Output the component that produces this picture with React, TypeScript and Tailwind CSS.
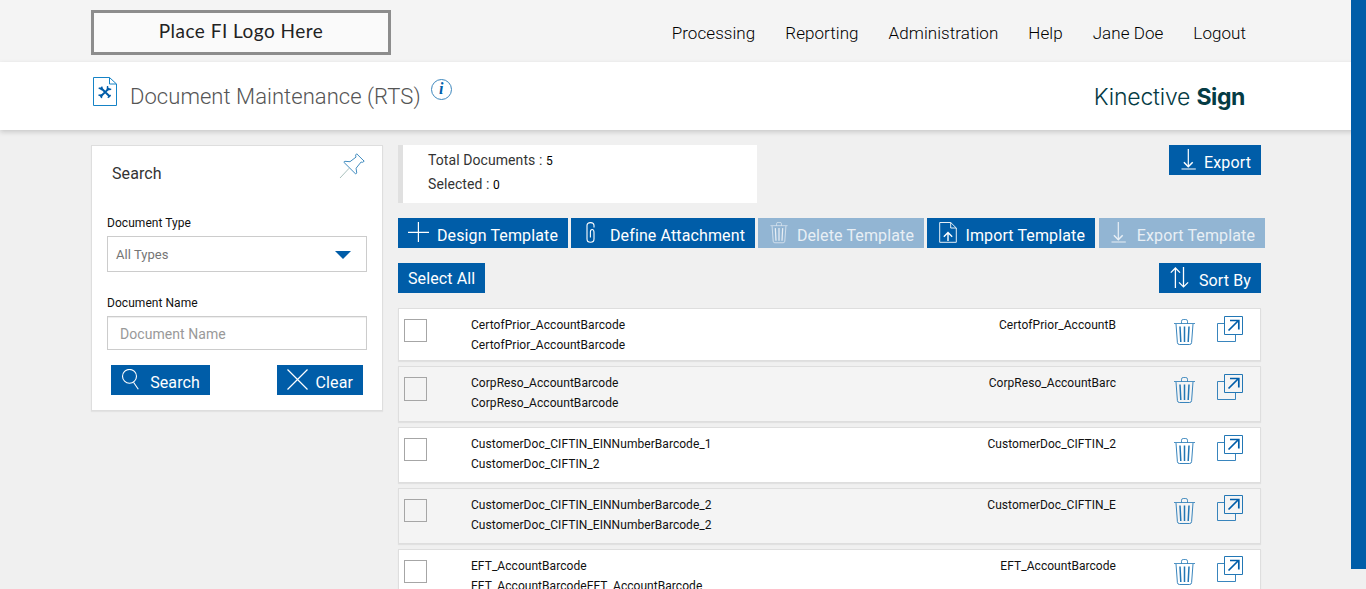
import type { ReactNode } from "react";

const navItems = ["Processing", "Reporting", "Administration", "Help", "Jane Doe", "Logout"];

const documents = [
    { name: "CertofPrior_AccountBarcode", description: "CertofPrior_AccountBarcode", code: "CertofPrior_AccountB", height: "h-[53px]", box: "h-[23px]", icons: "pt-[7px]" },
    { name: "CorpReso_AccountBarcode", description: "CorpReso_AccountBarcode", code: "CorpReso_AccountBarc", height: "h-14", box: "h-6", icons: "pt-[7px]" },
    { name: "CustomerDoc_CIFTIN_EINNumberBarcode_1", description: "CustomerDoc_CIFTIN_2", code: "CustomerDoc_CIFTIN_2", height: "h-14", box: "h-[23px]", icons: "pt-[7px]" },
    { name: "CustomerDoc_CIFTIN_EINNumberBarcode_2", description: "CustomerDoc_CIFTIN_EINNumberBarcode_2", code: "CustomerDoc_CIFTIN_E", height: "h-14", box: "h-[23px]", icons: "pt-1.5" },
    { name: "EFT_AccountBarcode", description: "EFT_AccountBarcodeEFT_AccountBarcode", code: "EFT_AccountBarcode", height: "h-14", box: "h-[23px]", icons: "pt-1.5" },
];

function TrashIcon({ className }: { className?: string }) {
    return (
        <svg width="21" height="27" viewBox="0 0 21 27" fill="none" stroke="currentColor" className={className}>
            <path d="M0 4.5h21M7.5 4.5V2.2q0-1.7 1.7-1.7h2.6q1.7 0 1.7 1.7v2.3" strokeWidth="0.8" />
            <path d="M2 5l1.4 18.6q.2 1.9 2 1.9h10.2q1.8 0 2-1.9L19 5" strokeWidth="0.9" />
            <path d="M6 7.5l.8 15.5M10.5 7.5V23M15 7.5L14.2 23" strokeWidth="1.5" />
        </svg>
    );
}

function OpenIcon() {
    return (
        <svg width="26" height="26" viewBox="0 0 26 26" fill="none" stroke="#2277b5">
            <path d="M7.5 7.5h-7v18h18v-7" strokeWidth="0.9" />
            <path d="M7.5.5h18v18h-18z" />
            <path d="M11.5 14.5l10-10M13 4.5h8.8v9" stroke="#005da9" strokeWidth="1.7" />
        </svg>
    );
}

function PlusIcon() {
    return (
        <svg width="21" height="21" viewBox="0 0 21 21" fill="none" stroke="currentColor" strokeWidth="1.2">
            <path d="M10.4 0v20M0 10.4h21" />
        </svg>
    );
}

function ClipIcon() {
    return (
        <svg width="9" height="21" viewBox="0 0 9 21" fill="none" stroke="currentColor" strokeWidth="1.1">
            <path d="M8 5.5V3.6Q8 .6 4.5.6T1 3.6V17q0 3.3 3.5 3.3T8 17v-6.5Q8 7.5 6.2 7.5T4.4 10v5.5" />
        </svg>
    );
}

function UploadIcon() {
    return (
        <svg width="18" height="21" viewBox="0 0 18 21" fill="none" stroke="currentColor">
            <path d="M.7.5h11L17.3 6v14.3H.7zM11.7.5V6h5.6" strokeWidth="0.9" />
            <path d="M9 19v-8.5M4.8 14.8L9 10.5l4.2 4.3" strokeWidth="1.4" />
        </svg>
    );
}

function DownloadIcon() {
    return (
        <svg width="15" height="21" viewBox="0 0 15 21" fill="none" stroke="currentColor">
            <path d="M7.3 0v17.5M.5 20h14.3" strokeWidth="1.2" />
            <path d="M2.9 13.2l4.4 4.5 4.4-4.5" strokeWidth="1.5" />
        </svg>
    );
}

function SortIcon() {
    return (
        <svg width="19" height="21" viewBox="0 0 19 21" fill="none" stroke="currentColor" strokeWidth="1.3">
            <path d="M5.4 21V1M.8 5.6L5.4 1 10 5.6M13.5 0v20M9 15.4l4.5 4.5 4.6-4.5" />
        </svg>
    );
}

function SearchIcon() {
    return (
        <svg width="18" height="21" viewBox="0 0 18 21" fill="none" stroke="currentColor" strokeWidth="1.1">
            <ellipse cx="8.5" cy="7.3" rx="7" ry="6.9" />
            <path d="M12.5 13.2l4.8 7" />
        </svg>
    );
}

function CloseIcon() {
    return (
        <svg width="21" height="21" viewBox="0 0 21 21" fill="none" stroke="currentColor" strokeWidth="1.2">
            <path d="M.5.5l20 20M20.5.5l-20 20" />
        </svg>
    );
}

function PinIcon() {
    return (
        <svg width="26" height="26" viewBox="0 0 26 26" fill="none" stroke="#2d7fb8" strokeWidth="0.9">
            <path d="M17.7.8l7.5 7.4-1.6 1.1-1.5-.3-5 6.2.6 4.7-1 1.1L4.8 9.2l1-.9 5.2.4 6-4.6-.4-2z" />
            <path d="M10.2 15.2L1 25" stroke="#9fb9b4" />
        </svg>
    );
}

function DocumentToolsIcon() {
    return (
        <svg width="24" height="29" viewBox="0 0 24 29" fill="none" stroke="#1683c6">
            <path d="M.5.5h16l7 6.5v21.5H.5z" />
            <path d="M16.5.5V7h7" />
            <path d="M7.5 10.5l9.5 9.3M7.3 19.7l9-8.6" stroke="#005da9" strokeWidth="2" />
            <path d="M5.7 10.8l2.8 1.6.6-2.8M14.6 9l-.3 3.6 3.9-.4M5.5 18.2l3.3-.2-.4 3.2M14.8 20.7l2.8-2.6" stroke="#005da9" strokeWidth="1.4" />
        </svg>
    );
}

type ButtonProps = {
    children: ReactNode;
    icon?: ReactNode;
    className?: string;
    disabled?: boolean;
};

function Button({ children, icon, className, disabled }: ButtonProps) {
    return (
        <button
            type="button"
            disabled={disabled}
            className={`flex h-[30px] shrink-0 items-start justify-between whitespace-nowrap pr-2.5 text-base tracking-[0.12px] ${icon ? "leading-9" : "leading-8"} ${disabled ? "bg-[#92b5d3] text-[#e8eff5]" : "bg-[#005da8] text-white"} ${className}`}
        >
            {icon && <span className="pt-1">{icon}</span>}
            <span>{children}</span>
        </button>
    );
}

export default function App() {
    return (
        <div className="relative h-[589px] overflow-hidden bg-[#f0f0f0] font-[Roboto,sans-serif] text-[#111]">
            <header className="flex h-[62px] items-start justify-between bg-[#f4f4f4] pl-[91px] pr-[120px]">
                <div className="mt-2.5 flex h-[45px] w-[300px] items-center justify-center border-3 border-[#8d8d8d] bg-[#fafafa] pb-0.5 font-[Lato,sans-serif] text-[19px] tracking-[0.47px] text-[#222]">
                    Place FI Logo Here
                </div>
                <nav className="flex gap-[30px] pt-[21px] text-[17px] leading-6 font-light tracking-[0.06px] text-black">
                    {navItems.map((item) => (
                        <a key={item} href="#">{item}</a>
                    ))}
                </nav>
            </header>

            <div className="relative flex h-[68px] items-start bg-white pl-[93px] pr-[121px] shadow-[0_2px_5px_rgba(0,0,0,0.17)]">
                <div className="pt-[15px]"><DocumentToolsIcon /></div>
                <h1 className="pt-5 pl-[13px] text-[22px] leading-[30px] font-light tracking-[0.05px] text-[#555]">Document Maintenance (RTS)</h1>
                <span className="mt-[17px] ml-2.5 flex size-[21px] items-center justify-center rounded-full border border-[#3d87bd] pb-px font-['Liberation_Serif',serif] text-[16px] leading-none font-bold text-[#005da9] italic">i</span>
                <div className="mt-5 ml-auto font-[Inter,sans-serif] text-[23px] leading-[30px] font-light tracking-[-0.2px] text-[#053b44]">
                    Kinective <span className="font-bold tracking-[-0.4px]">Sign</span>
                </div>
            </div>

            <main className="flex items-start gap-[15px] pt-[15px] pl-[91px]">
                <aside className="h-[266px] w-[292px] shrink-0 border border-[#dedede] bg-white px-[15px] shadow-[0_1px_1px_rgba(0,0,0,0.05)]">
                    <div className="flex h-[67px] items-start justify-between pt-[7px] pr-0.5 pl-[5px]">
                        <h2 className="pt-[9px] text-base leading-6 tracking-[0.1px] text-[#333]">Search</h2>
                        <PinIcon />
                    </div>
                    <label className="block text-xs leading-5 tracking-[0.05px]">Document Type</label>
                    <div className="mt-[3px] flex h-9 items-center justify-between border border-[#ccc] pr-[15px] pl-2 text-[13px] text-[#757575]">
                        <span className="pt-0.5 tracking-[0.05px]">All Types</span>
                        <svg width="16" height="8" viewBox="0 0 16 8" fill="#005da8" className="mt-0.5"><path d="M0 0h16L8 8z" /></svg>
                    </div>
                    <label className="mt-[21px] block text-xs leading-5 tracking-[0.05px]">Document Name</label>
                    <input
                        placeholder="Document Name"
                        className="mt-[3px] block h-[34px] w-full border border-[#ccc] px-3 pt-0.5 text-sm tracking-[0.06px] shadow-[inset_0_1px_1px_rgba(0,0,0,0.075)] placeholder:text-[#999]"
                    />
                    <div className="mt-[15px] flex justify-between px-1">
                        <Button icon={<SearchIcon />} className="w-[99px] pl-2.5">Search</Button>
                        <Button icon={<CloseIcon />} className="w-[86px] pl-2.5">Clear</Button>
                    </div>
                </aside>

                <section className="w-[867px] shrink-0">
                    <div className="flex items-start justify-between pr-1">
                        <div className="h-[58px] w-[359px] border-l-5 border-[#e0e0e0] bg-white pt-[3px] pl-[25px] text-sm leading-6 tracking-[0.08px] text-[#333]">
                            <p>Total Documents : <span className="text-xs text-black">5</span></p>
                            <p>Selected : <span className="text-xs text-black">0</span></p>
                        </div>
                        <Button icon={<DownloadIcon />} className="w-[92px] pl-[12px]">Export</Button>
                    </div>

                    <div className="mt-[15px] flex gap-[3px]">
                        <Button icon={<PlusIcon />} className="w-[170px] pl-2.5">Design Template</Button>
                        <Button icon={<ClipIcon />} className="w-[184px] pl-[15px]">Define Attachment</Button>
                        <Button icon={<TrashIcon className="h-[22px] w-[18px]" />} className="w-[166px] pl-3" disabled>Delete Template</Button>
                        <Button icon={<UploadIcon />} className="w-[168px] pl-3">Import Template</Button>
                        <Button icon={<DownloadIcon />} className="ml-px w-[166px] pl-3" disabled>Export Template</Button>
                    </div>

                    <div className="mt-[15px] flex justify-between pr-1">
                        <Button className="w-[87px] pl-2.5">Select All</Button>
                        <Button icon={<SortIcon />} className="w-[102px] pl-[11px]">Sort By</Button>
                    </div>

                    <ul className="mt-[15px] w-[863px] space-y-[5px] text-xs leading-5 tracking-[0.05px]">
                        {documents.map((doc) => (
                            <li key={doc.name} className={`flex items-start border border-[#dedede] pl-[5px] shadow-[0_1px_1px_rgba(0,0,0,0.06)] odd:bg-white even:bg-[#f4f4f4] ${doc.height}`}>
                                <span className={`mt-2.5 w-[23px] shrink-0 border border-[#a6a6a6] ${doc.box}`} />
                                <div className="w-[400px] pt-1.5 pl-11">
                                    <p>{doc.name}</p>
                                    <p>{doc.description}</p>
                                </div>
                                <p className="w-[289px] pt-1.5 text-right">{doc.code}</p>
                                <div className={`flex gap-[22px] pl-[58px] text-[#2277b5] ${doc.icons}`}>
                                    <TrashIcon className="mt-[3px]" />
                                    <OpenIcon />
                                </div>
                            </li>
                        ))}
                    </ul>
                </section>
            </main>

            {/* side panel handle */}
            <div className="absolute top-0 right-0 h-[569px] w-[15px] bg-[#005da8]" />
        </div>
    );
}
